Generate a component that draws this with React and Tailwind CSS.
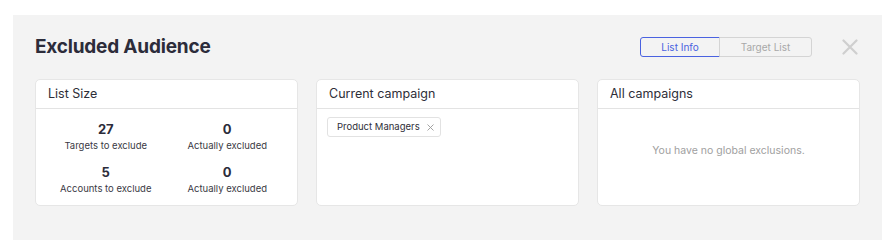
import React, { useState } from 'react';

const stats = [
  { value: '27', label: 'Targets to exclude' },
  { value: '0', label: 'Actually excluded' },
  { value: '5', label: 'Accounts to exclude' },
  { value: '0', label: 'Actually excluded' },
];

const Card = ({ title, children }) => (
  <div className="flex h-[127px] w-[263px] flex-col rounded-[5px] border border-[#e6e6e6] bg-white">
    <div className="flex h-[29px] items-center border-b border-[#e3e3e3] px-[12px] text-[12.5px] text-[#2e2e38]">
      {title}
    </div>
    <div className="flex-1">{children}</div>
  </div>
);

const ExcludedAudience = () => {
  const [tab, setTab] = useState('info');

  return (
    <div className="min-h-[252px] bg-white pl-[13px] pr-[12px] pt-[15px] pb-[12px]" style={{ fontFamily: 'Inter, "Liberation Sans", sans-serif' }}>
      <div className="h-[225px] w-[869px] bg-[#f3f3f3] px-[22px] pt-[18px]">
        <div className="flex h-[28px] items-center justify-between">
          <h2 className="text-[19px] font-bold tracking-[-0.2px] text-[#2c2c3a]">Excluded Audience</h2>
          <div className="flex items-center">
            <div className="flex text-[10px]">
              <button
                onClick={() => setTab('info')}
                className={`h-[20px] w-[80px] rounded-l-[3px] border ${tab === 'info' ? 'border-[#4a62e0] text-[#4a62e0]' : 'border-[#d4d4d4] text-[#a8a8a8]'}`}
              >
                List Info
              </button>
              <button
                onClick={() => setTab('target')}
                className={`-ml-px h-[20px] w-[93px] rounded-r-[3px] border ${tab === 'target' ? 'border-[#4a62e0] text-[#4a62e0]' : 'border-[#d4d4d4] text-[#a8a8a8]'}`}
              >
                Target List
              </button>
            </div>
            <button className="ml-[30px] mr-[2px] text-[#cfcfcf]">
              <svg width="16" height="16" viewBox="0 0 16 16" stroke="currentColor" strokeWidth="2.2" strokeLinecap="round">
                <path d="M1.5 1.5 L14.5 14.5 M14.5 1.5 L1.5 14.5" />
              </svg>
            </button>
          </div>
        </div>

        <div className="mt-[18px] flex gap-[18px]">
          <Card title="List Size">
            <div className="grid grid-cols-2 gap-y-[9px] px-[9px] pt-[10px]">
              {stats.map((s, i) => (
                <div key={i} className="flex flex-col items-center">
                  <span className="text-[13px] font-bold leading-[20px] text-[#2c2c3a]">{s.value}</span>
                  <span className="text-[9.5px] leading-[14px] text-[#3a3a44]">{s.label}</span>
                </div>
              ))}
            </div>
          </Card>
          <Card title="Current campaign">
            <div className="flex px-[10px] pt-[8px]">
              <span className="flex h-[20px] w-[114px] items-center gap-[7px] rounded-[3px] border border-[#e2e2e2] pl-[9px] text-[9.5px] text-[#2e2e38]">
                Product Managers
                <svg width="7" height="7" viewBox="0 0 7 7" stroke="#9a9a9a" strokeWidth="0.9">
                  <path d="M0.5 0.5 L6.5 6.5 M6.5 0.5 L0.5 6.5" />
                </svg>
              </span>
            </div>
          </Card>
          <Card title="All campaigns">
            <div className="flex h-full items-center justify-center pb-[12px] text-[10.5px] text-[#a0a0a0]">
              You have no global exclusions.
            </div>
          </Card>
        </div>
      </div>
    </div>
  );
};

export default ExcludedAudience;
